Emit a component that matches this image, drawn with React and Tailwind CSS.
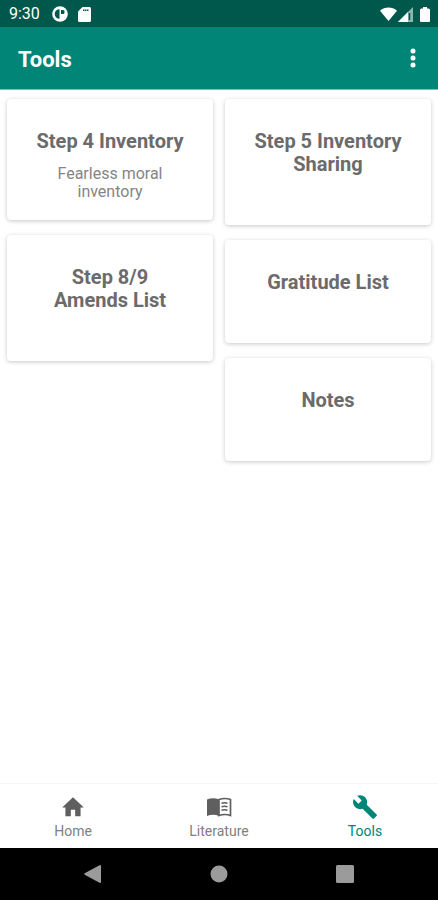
const CARD_COLUMNS = [
  [
    { title: 'Step 4 Inventory', text: 'Fearless moral inventory', size: 'h-[121px]' },
    { title: 'Step 8/9 Amends List', size: 'h-[126px]' },
  ],
  [
    { title: 'Step 5 Inventory Sharing', size: 'h-[126px]' },
    { title: 'Gratitude List', size: 'h-[103px]' },
    { title: 'Notes', size: 'h-[103px]' },
  ],
];

const TABS = [
  { label: 'Home', Icon: HomeIcon },
  { label: 'Literature', Icon: BookIcon },
  { label: 'Tools', Icon: WrenchIcon, active: true },
];

function HomeIcon() {
  return (
    <svg viewBox="0 0 24 24" className="size-[26px]" fill="currentColor" aria-hidden="true">
      <path d="M10 20.500v-6h4v6h5V12.500h3L12 3 2 12.500h3v8z" />
    </svg>
  );
}

function BookIcon() {
  return (
    <svg viewBox="0 0 26 26" className="size-[26px]" aria-hidden="true">
      <path d="M1 5.500Q7 3 13 5.500V22Q7 19.500 1 22z" fill="currentColor" />
      <path d="M13 5.500Q19 3.500 24.500 5.500V21.500Q19 19.500 13 21.500z" fill="none" stroke="currentColor" strokeWidth="1.700" />
      <path d="M15.500 9.200q3-1 6 0M15.500 12.700q3-1 6 0M15.500 16.200q3-1 6 0" fill="none" stroke="currentColor" strokeWidth="1.600" />
    </svg>
  );
}

function WrenchIcon() {
  return (
    <svg viewBox="0 0 24 24" className="size-[26px]" fill="currentColor" aria-hidden="true">
      <path d="M22.700 19l-9.100-9.100c.900-2.300.400-5-1.500-6.900-2-2-5-2.400-7.400-1.300L9 6 6 9 1.600 4.700C.400 7.100.900 10.100 2.900 12.100c1.900 1.900 4.600 2.400 6.900 1.500l9.100 9.100c.400.400 1 .400 1.400 0l2.300-2.300c.500-.400.500-1.100.100-1.400z" />
    </svg>
  );
}

function StatusBar() {
  return (
    <div className="flex h-[27px] items-center bg-[#00574b] pl-[9px] pr-2 pt-px text-white">
      <span className="text-base leading-none">9:30</span>
      <svg viewBox="0 0 16 16" className="ml-3 size-4" aria-hidden="true">
        <circle cx="8" cy="8" r="7.800" fill="#fff" />
        <path d="M7.500 3.200v9.600A4.800 4.800 0 0 1 7.500 3.200zM4 5.500h3.500v5H4z" fill="#00574b" />
        <path d="M9 4h2a1.500 1.500 0 0 1 1.500 1.500v1A1.500 1.500 0 0 1 11 8H9z" fill="#00574b" />
      </svg>
      <svg viewBox="0 0 13 15" className="ml-[10px] h-[15px] w-[13px]" aria-hidden="true">
        <path d="M4.500 0H11.500a1.500 1.500 0 0 1 1.500 1.500v12a1.500 1.500 0 0 1-1.500 1.500h-10A1.500 1.500 0 0 1 0 13.500V4.500z" fill="#fff" />
        <path d="M5 3.300h5.500" stroke="#00574b" strokeWidth="1.500" strokeDasharray="1.500 .5" />
      </svg>
      <svg viewBox="0 0 18 15" className="ml-auto h-[15px] w-[17px]" fill="#fff" aria-hidden="true">
        <path d="M0 3.500C5-1 13-1 18 3.500L9 14.500z" />
      </svg>
      <svg viewBox="0 0 15 15" className="ml-px h-[15px] w-[15px]" aria-hidden="true">
        <path d="M15 0v15H0z" fill="#8fb5af" />
        <path d="M10 5v10H0z" fill="#fff" />
        <path d="M11.500 6v7" stroke="#00574b" strokeWidth="1.500" />
      </svg>
      <svg viewBox="0 0 10 15" className="ml-[7px] h-[15px] w-[10px]" fill="#fff" aria-hidden="true">
        <path d="M3 0h4v1.500h1.500A1.500 1.500 0 0 1 10 3v11a1 1 0 0 1-1 1H1a1 1 0 0 1-1-1V3a1.500 1.500 0 0 1 1.500-1.500H3z" />
      </svg>
    </div>
  );
}

function ToolCard({ title, text, size }) {
  return (
    <button
      type="button"
      className={`${size} flex w-full flex-col items-center rounded-[4px] bg-white px-[27px] pt-[31px] shadow-[0_1px_4px_rgba(0,0,0,0.22)]`}
    >
      <span className="text-[20px] font-bold leading-[23px] text-[#6b6b6b]">{title}</span>
      {text && <span className="mt-3 text-base leading-[18px] text-[#858585]">{text}</span>}
    </button>
  );
}

export default function App() {
  return (
    <div className="flex min-h-screen flex-col bg-white font-['Roboto',sans-serif]">
      <StatusBar />
      <header className="flex h-[63px] items-center justify-between border-b border-[#80bdb5] bg-[#008577] pl-[18px] pr-[15px] text-white">
        <h1 className="pt-1 text-[22px] font-bold leading-7">Tools</h1>
        <button type="button" aria-label="More options" className="flex h-10 w-5 items-center justify-center">
          <svg viewBox="0 0 6 20" className="h-5 w-[6px]" fill="currentColor" aria-hidden="true">
            <circle cx="3" cy="3" r="2.500" />
            <circle cx="3" cy="10" r="2.500" />
            <circle cx="3" cy="17" r="2.500" />
          </svg>
        </button>
      </header>

      <main className="grid flex-1 grid-cols-2 items-start gap-3 px-[7px] pt-[9px]">
        {CARD_COLUMNS.map((cards, i) => (
          <div key={i} className="flex flex-col gap-[15px]">
            {cards.map((card) => (
              <ToolCard key={card.title} {...card} />
            ))}
          </div>
        ))}
      </main>

      <nav className="grid h-[65px] grid-cols-3 border-t border-[#f5f5f5] bg-white">
        {TABS.map(({ label, Icon, active }) => (
          <button
            key={label}
            type="button"
            aria-current={active ? 'page' : undefined}
            className={`flex flex-col items-center pt-[10px] ${active ? 'text-[#008577]' : 'text-[#5f5f5f]'}`}
          >
            <Icon />
            <span className={`mt-[3px] text-sm leading-4 ${active ? '' : 'text-[#808080]'}`}>{label}</span>
          </button>
        ))}
      </nav>

      <div className="flex h-[52px] items-center justify-center bg-black text-[#9b9b9b]">
        <button type="button" aria-label="Back" className="flex w-[126px] justify-center">
          <svg viewBox="0 0 18 20" className="h-5 w-[18px]" fill="currentColor" aria-hidden="true">
            <path d="M15.500 1.200a1 1 0 0 1 1.500.800v16a1 1 0 0 1-1.500.800L.700 10.700q-1-.700 0-1.400z" />
          </svg>
        </button>
        <button type="button" aria-label="Home screen" className="flex w-[126px] justify-center">
          <svg viewBox="0 0 18 18" className="size-[18px]" fill="currentColor" aria-hidden="true">
            <circle cx="9" cy="9" r="8.500" />
          </svg>
        </button>
        <button type="button" aria-label="Recent apps" className="flex w-[126px] justify-center">
          <svg viewBox="0 0 18 18" className="size-[18px]" fill="currentColor" aria-hidden="true">
            <rect width="18" height="18" rx="1.500" />
          </svg>
        </button>
      </div>
    </div>
  );
}
